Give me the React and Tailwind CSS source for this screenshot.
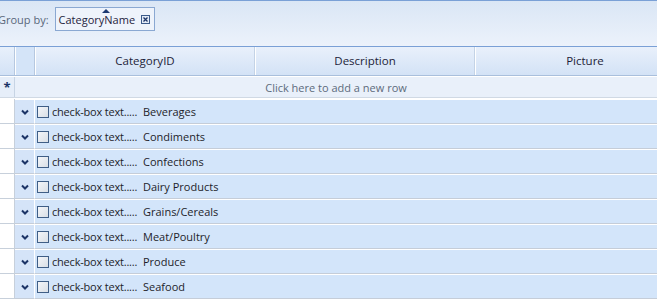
const categories = [
  'Beverages',
  'Condiments',
  'Confections',
  'Dairy Products',
  'Grains/Cereals',
  'Meat/Poultry',
  'Produce',
  'Seafood',
]

const columns = ['CategoryID', 'Description', 'Picture']

const Chevron = () => (
  <svg width="8" height="6" viewBox="0 0 8 6" className="block">
    <path d="M1 1.5 L4 4.5 L7 1.5" fill="none" stroke="#1c3466" strokeWidth="2" />
  </svg>
)

const GroupRow = ({ name }) => (
  <div className="flex h-[25px]">
    <div className="w-[15px] shrink-0 bg-white border-r border-b border-[#c7d0db]" />
    <div className="w-[19px] shrink-0 flex items-center justify-center bg-[#d5e4f8] border-t border-white border-b border-b-[#c5cdd8]">
      <Chevron />
    </div>
    <div className="flex-1 flex items-center bg-[#d3e5fa] border-l border-white border-t border-t-white border-b border-b-[#c5cdd8] pl-[2px] whitespace-nowrap">
      <span className="w-[12px] h-[12px] shrink-0 border border-[#3f5e86] bg-gradient-to-br from-[#f4f6f9] to-[#d9dfe6]" />
      <span className="w-[94px] shrink-0 pl-[3px] text-[#1e1e2a] tracking-[-0.2px]">check-box text.....</span>
      <span className="text-[#1e1e2a]">{name}</span>
    </div>
  </div>
)

export default function App() {
  return (
    <div
      className="w-[657px] h-[307px] overflow-hidden bg-white text-[11px] leading-none"
      style={{ fontFamily: '"Open Sans", "Noto Sans", sans-serif' }}
    >
      {/* Group panel */}
      <div className="h-[47px] border-t border-b border-[#7aa0d6] bg-gradient-to-b from-[#dae6f5] to-[#ecf2fb] flex items-center -ml-[2px] pb-[9px] whitespace-nowrap">
        <span className="text-[#59677a] text-[11px] mr-[6px]">Group by:</span>
        <div className="relative h-[24px] flex items-center border border-[#8aa8d2] bg-[#eef3fb] pl-[3px] pr-[4px]">
          <span className="text-[#1f2340] text-[11px]">CategoryName</span>
          <svg width="8" height="4" viewBox="0 0 8 4" className="absolute left-[46px] top-[1px]">
            <path d="M0 4 L4 0 L8 4 Z" fill="#1c3a72" />
          </svg>
          <span className="ml-[6px] w-[9px] h-[9px] border border-[#3b5a8a] bg-[#e3ebf7] flex items-center justify-center">
            <svg width="5" height="5" viewBox="0 0 5 5">
              <path d="M0.5 0.5 L4.5 4.5 M4.5 0.5 L0.5 4.5" stroke="#1c3466" strokeWidth="1.3" />
            </svg>
          </span>
        </div>
      </div>

      {/* Header */}
      <div className="flex h-[29px] border-b border-[#a9bfdc] w-[700px]">
        <div className="w-[15px] shrink-0 bg-gradient-to-b from-[#e8f0fb] to-[#d3e2f6] border-r border-[#b6c8e0]" />
        <div className="w-[20px] shrink-0 bg-[#d4e4f8] border-r border-[#b6c8e0] border-l border-l-white" />
        {columns.map((c) => (
          <div
            key={c}
            className="w-[220px] shrink-0 flex items-center justify-center bg-gradient-to-b from-[#e9f0fb] to-[#d3e2f6] border-l border-white border-r border-r-[#c4d3e6] text-[11.5px] text-[#1d1d38]"
          >
            {c}
          </div>
        ))}
      </div>

      {/* New row */}
      <div className="flex h-[22px] border-t border-white border-b border-b-[#d0d9e4]">
        <div className="w-[15px] shrink-0 bg-[#e6eef9] border-r border-[#c7d4e4] flex items-center justify-center text-[#1c3466] text-[13px] font-bold">
          *
        </div>
        <div className="flex-1 bg-[#e9f0fa] flex items-center justify-center text-[#5d6b7c] text-[11px]">
          Click here to add a new row
        </div>
      </div>

      {/* Group rows */}
      <div className="border-t border-white">
        {categories.map((c) => (
          <GroupRow key={c} name={c} />
        ))}
      </div>
    </div>
  )
}
